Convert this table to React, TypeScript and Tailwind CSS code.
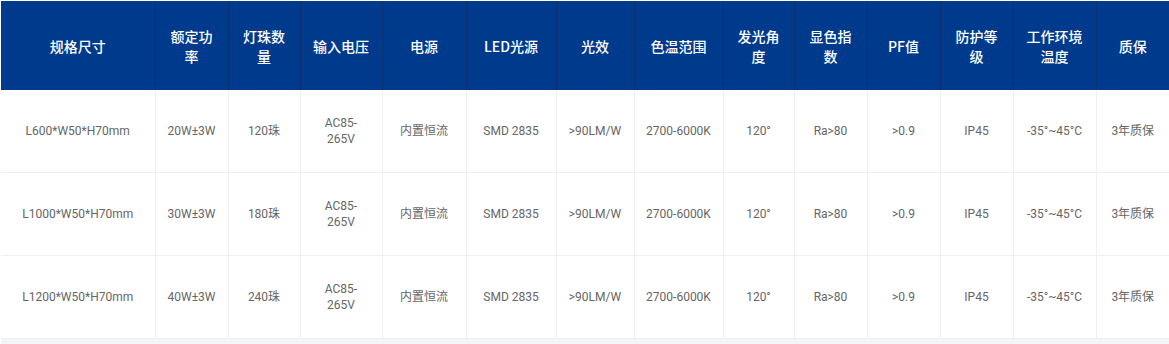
import React from "react";

const heads = [
  "规格尺寸",
  "额定功率",
  "灯珠数量",
  "输入电压",
  "电源",
  "LED光源",
  "光效",
  "色温范围",
  "发光角度",
  "显色指数",
  "PF值",
  "防护等级",
  "工作环境温度",
  "质保",
];

const widths = [154, 73, 72, 82, 84, 90, 78, 89, 71, 73, 73, 73, 83, 73];

const rows = [
  ["L600*W50*H70mm", "20W±3W", "120珠"],
  ["L1000*W50*H70mm", "30W±3W", "180珠"],
  ["L1200*W50*H70mm", "40W±3W", "240珠"],
];

const common = ["内置恒流", "SMD 2835", ">90LM/W", "2700-6000K", "120°", "Ra>80", ">0.9", "IP45", "-35°~45°C", "3年质保"];

const rowH = ["h-[82px]", "h-[83px]", "h-[83px]"];

export default function App() {
  return (
    <div className="w-[1169px] h-[344px] overflow-hidden bg-white pt-px pl-px font-['Roboto','Noto_Sans_CJK_SC',sans-serif]">
      <table className="table-fixed border-collapse w-[1168px]">
        <colgroup>
          {widths.map((w, i) => (
            <col key={i} style={{ width: w }} />
          ))}
        </colgroup>
        <thead>
          <tr className="h-[89px] bg-[#003a8c]">
            {heads.map((h, i) => (
              <th
                key={i}
                className={`px-3 text-center text-[14px] leading-[20px] font-medium text-white font-['Noto_Sans_CJK_SC',sans-serif] ${
                  i < heads.length - 1 ? "border-r border-[#0c3170]" : ""
                }`}
              >
                {h}
              </th>
            ))}
          </tr>
        </thead>
        <tbody>
          {rows.map((r, ri) => (
            <tr key={ri} className={`${rowH[ri]} border-b border-[#f0f0f0]`}>
              {[...r, "AC85-265V", ...common].map((c, ci) => (
                <td
                  key={ci}
                  className={`text-center text-[12px] leading-[16px] text-[#666] whitespace-nowrap ${
                    ci < 13 ? "border-r border-[#f0f0f0]" : ""
                  }`}
                >
                  {c === "AC85-265V" ? (
                    <>
                      AC85-
                      <br />
                      265V
                    </>
                  ) : (
                    c
                  )}
                </td>
              ))}
            </tr>
          ))}
        </tbody>
      </table>
      <div className="h-[6px] bg-[#f3f6f9]" />
    </div>
  );
}
